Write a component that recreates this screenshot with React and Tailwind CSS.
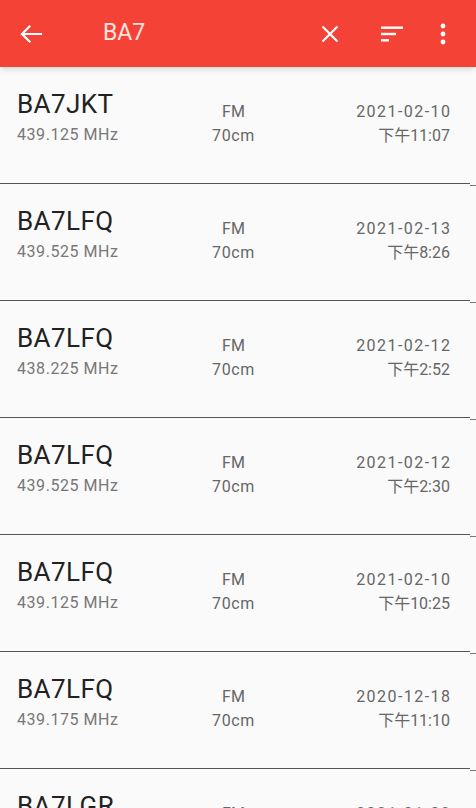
import React from "react";

const rows = [
  ["BA7JKT", "439.125 MHz", "2021-02-10", "下午11:07"],
  ["BA7LFQ", "439.525 MHz", "2021-02-13", "下午8:26"],
  ["BA7LFQ", "438.225 MHz", "2021-02-12", "下午2:52"],
  ["BA7LFQ", "439.525 MHz", "2021-02-12", "下午2:30"],
  ["BA7LFQ", "439.125 MHz", "2021-02-10", "下午10:25"],
  ["BA7LFQ", "439.175 MHz", "2020-12-18", "下午11:10"],
  ["BA7LGR", "439.125 MHz", "2021-01-09", "下午9:41"],
];

const font = { fontFamily: '"Roboto", "Noto Sans CJK SC", sans-serif' };

function Row({ call, freq, date, time }) {
  return (
    <div>
      <div className="h-[116px] grid grid-cols-3 pl-[17px] pr-[26px]">
        <div className="pt-[22px]">
          <div className="text-[26px] leading-[30px] tracking-[0.4px] text-[#222]">{call}</div>
          <div className="mt-[6px] text-[16px] leading-[20px] tracking-[0.55px] text-[#777]">{freq}</div>
        </div>
        <div className="pt-[33px] text-center text-[16px] leading-[24px] text-[#666]">
          <div>FM</div>
          <div className="tracking-[0.6px]">70cm</div>
        </div>
        <div className="pt-[33px] flex flex-col items-end text-[16px] leading-[24px] text-[#666]">
          <div className="tracking-[1.45px] mr-[-1.45px]">{date}</div>
          <div>{time}</div>
        </div>
      </div>
      <div className="flex h-px">
        <div className="flex-1 h-px bg-[#555]" />
        <div className="w-[6px] h-px mt-[2px] bg-[#777]" />
      </div>
    </div>
  );
}

export default function App() {
  return (
    <div className="w-[476px] h-[808px] overflow-hidden bg-[#fafafa]" style={font}>
      <div className="relative z-10 h-[67px] bg-[#f44336] flex items-center shadow-md">
        <svg width="24" height="20" viewBox="0 0 24 20" className="ml-[19px]">
          <path d="M22 10H3M10.5 2.5L3 10l7.5 7.5" fill="none" stroke="#fff" strokeWidth="2.2" strokeLinecap="square" />
        </svg>
        <span className="ml-[60px] text-[23px] text-[#fde4e1]">BA7</span>
        <div className="flex-1" />
        <svg width="20" height="20" viewBox="0 0 20 20">
          <path d="M2.5 2.5L17.5 17.5M17.5 2.5L2.5 17.5" fill="none" stroke="#fff" strokeWidth="2.2" />
        </svg>
        <svg width="24" height="20" viewBox="0 0 24 20" className="ml-[40px]">
          <rect x="1" y="2.5" width="22" height="2.4" fill="#fff" />
          <rect x="1" y="8.8" width="15" height="2.4" fill="#fff" />
          <rect x="1" y="15.1" width="8" height="2.4" fill="#fff" />
        </svg>
        <svg width="8" height="24" viewBox="0 0 8 24" className="ml-[35px] mr-[29px]">
          <circle cx="4" cy="4" r="2.4" fill="#fff" />
          <circle cx="4" cy="12" r="2.4" fill="#fff" />
          <circle cx="4" cy="20" r="2.4" fill="#fff" />
        </svg>
      </div>
      {rows.map((r, i) => (
        <Row key={i} call={r[0]} freq={r[1]} date={r[2]} time={r[3]} />
      ))}
    </div>
  );
}
